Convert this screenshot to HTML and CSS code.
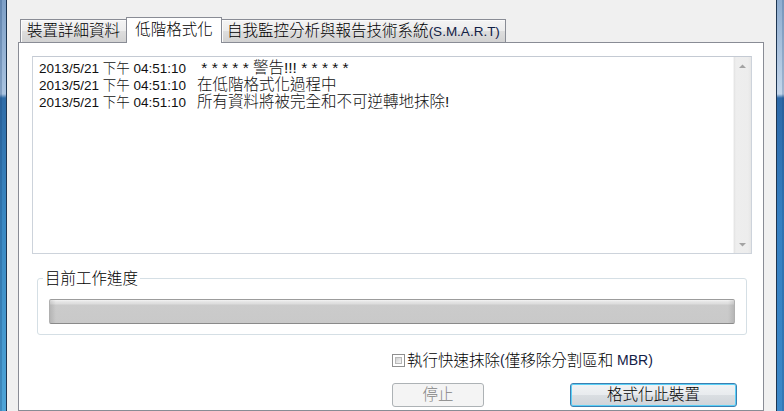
FILE: index.html
```html
<!DOCTYPE html>
<html lang="zh-Hant">
<head>
<meta charset="utf-8">
<title>低階格式化</title>
<link rel="stylesheet" href="styles.css">
</head>
<body>
<div class="window">
  <div class="frame frame-left"></div>
  <div class="client">
    <div class="tabs">
      <div class="tab tab-first">裝置詳細資料</div>
      <div class="tab tab-active">低階格式化</div>
      <div class="tab tab-last">自我監控分析與報告技術系統<span class="lat">(S.M.A.R.T)</span></div>
    </div>
    <div class="panel">
      <div class="log">
        <div class="log-body">
          <div class="line"><span class="ts">2013/5/21 下午 04:51:10</span><span class="msg"> * * * * * 警告!!! * * * * *</span></div>
          <div class="line"><span class="ts">2013/5/21 下午 04:51:10</span><span class="msg">在低階格式化過程中</span></div>
          <div class="line"><span class="ts">2013/5/21 下午 04:51:10</span><span class="msg">所有資料將被完全和不可逆轉地抹除!</span></div>
        </div>
        <div class="scrollbar">
          <svg class="arrow" width="17" height="17" viewBox="0 0 17 17"><path d="M5 11 L8.5 7.5 L12 11 Z" fill="#a3a3a3"/></svg>
          <svg class="arrow" width="17" height="17" viewBox="0 0 17 17"><path d="M5 7 L8.5 10.5 L12 7 Z" fill="#a3a3a3"/></svg>
        </div>
      </div>
      <fieldset class="group">
        <legend class="group-title">目前工作進度</legend>
        <div class="progress"></div>
      </fieldset>
      <div class="actions">
        <div class="check"><span class="box"><span class="box-inner"></span></span>執行快速抹除<span class="lat">(</span>僅移除分割區和<span class="lat"> MBR)</span></div>
        <div class="buttons">
          <div class="btn btn-disabled">停止</div>
          <div class="btn btn-default">格式化此裝置</div>
        </div>
      </div>
    </div>
  </div>
  <div class="frame frame-right"></div>
</div>
</body>
</html>
```
FILE: styles.css
```css
html, body {
  margin: 0;
  padding: 0;
}
body {
  width: 784px;
  height: 411px;
  overflow: hidden;
  background: #f0f0f0;
  font-family: "Liberation Sans", "Noto Sans CJK TC", sans-serif;
  font-size: 15.5px;
  font-weight: 300;
  color: #000;
}
.window {
  display: flex;
  height: 411px;
}
.frame-left {
  width: 6px;
  border-right: 1px solid #1e3652;
  background: linear-gradient(to bottom, #7d9fc6 0, #a9c3e0 94px, #2f6ca7 98px, #3a88c2 220px, #4ea4d7 411px);
  box-shadow: inset 2px 0 0 rgba(20, 60, 110, 0.25);
}
.frame-right {
  width: 7px;
  border-left: 1px solid #1e3652;
  background: linear-gradient(to bottom, #8fadd0 0, #c3d5ea 94px, #2d69a8 98px, #3680c2 220px, #3c88c8 411px);
  box-shadow: inset -2px 0 0 rgba(20, 60, 110, 0.2);
}
.client {
  flex: 1;
  padding: 17px 12px 0 11px;
  display: flex;
  flex-direction: column;
}
.tabs {
  display: flex;
  align-items: flex-end;
  height: 25px;
  padding-left: 2px;
}
.tab {
  box-sizing: border-box;
  height: 23px;
  line-height: 22px;
  text-align: center;
  border-top: 1px solid #898c95;
  background: linear-gradient(to bottom, #f4f4f4 0, #ececec 50%, #dedede 50%, #d2d2d2 100%);
  box-shadow: inset 1px 1px 0 #fbfbfb;
  white-space: nowrap;
}
.tab-first {
  width: 106px;
  border-left: 1px solid #898c95;
}
.tab-last {
  width: 284px;
  border-right: 1px solid #898c95;
}
.tab-active {
  position: relative;
  z-index: 1;
  width: 96px;
  height: 26px;
  line-height: 24px;
  margin-bottom: -1px;
  border: 1px solid #898c95;
  border-bottom: none;
  background: #fff;
  box-shadow: none;
}
.lat {
  font-size: 14px;
  font-weight: 400;
  color: #122146;
}
.tab-last .lat {
  font-size: 13.5px;
}
.panel {
  height: 400px;
  border: 1px solid #898c95;
  background: #fff;
  display: flex;
  flex-direction: column;
}
.log {
  box-sizing: border-box;
  width: 720px;
  height: 198px;
  margin: 13px 0 0 13px;
  border: 1px solid #cdd3db;
  border-top-color: #c4cad3;
  display: flex;
}
.log-body {
  flex: 1;
  padding: 2px 0 0 6px;
}
.line {
  height: 17px;
  line-height: 17px;
  white-space: pre;
  color: #101010;
}
.ts {
  display: inline-block;
  width: 158px;
  font-size: 13.5px;
}
.msg {
  font-size: 15.5px;
}
.scrollbar {
  width: 17px;
  display: flex;
  flex-direction: column;
  justify-content: space-between;
  background: linear-gradient(to right, #e3e3e3 0, #eeeeee 2px, #ededed 14px, #e6e6e6 17px);
  border-left: 1px solid #f4f4f4;
}
.arrow {
  display: block;
}
.group {
  box-sizing: border-box;
  width: 710px;
  margin: 16px 0 0 18px;
  padding: 0 11px 10px 5px;
  border: 1px solid #d5dfe5;
  border-radius: 3px;
  min-width: 0;
}
.group-title {
  padding: 0 2px;
  line-height: 17px;
  font-size: 15.5px;
  color: #000;
}
.progress {
  box-sizing: border-box;
  height: 25px;
  margin: 12px 0 0 6px;
  border: 1px solid #b0b0b0;
  border-top-color: #9c9c9c;
  border-bottom-color: #8a8a8a;
  border-radius: 2px;
  background:
    linear-gradient(to right, rgba(0,0,0,0.10) 0, rgba(0,0,0,0) 6px, rgba(0,0,0,0) calc(100% - 6px), rgba(0,0,0,0.10) 100%),
    linear-gradient(to bottom, #f4f4f4 0, #e3e3e3 2px, #dcdcdc 4px, #cbcbcb 5px, #c9c9c9 100%);
}
.actions {
  margin: 17px 0 0 373px;
  display: flex;
  flex-direction: column;
}
.check {
  display: flex;
  align-items: center;
  height: 17px;
  line-height: 17px;
  white-space: pre;
}
.box {
  box-sizing: border-box;
  width: 13px;
  height: 13px;
  margin-right: 2px;
  border: 1px solid #8f8f8f;
  background: #fff;
  padding: 2px;
  display: flex;
}
.box-inner {
  flex: 1;
  border: 1px solid #b9b9b9;
  background: linear-gradient(135deg, #cfcfcf 0, #e8e8e8 60%, #f6f6f6 100%);
}
.buttons {
  display: flex;
  gap: 86px;
  margin-top: 14px;
}
.btn {
  box-sizing: border-box;
  height: 24px;
  line-height: 22px;
  text-align: center;
  border-radius: 3px;
  font-size: 15.5px;
}
.btn-disabled {
  width: 92px;
  border: 1px solid #adb2b5;
  background: #f4f4f4;
  color: #838383;
}
.btn-default {
  width: 167px;
  border: 1px solid #3c7fb1;
  box-shadow: inset 0 0 0 1px #5ad0f7;
  background: linear-gradient(to bottom, #f1f3f5 0, #e8ebee 50%, #dadee2 50%, #cfd4d9 100%);
  color: #000;
}
```
